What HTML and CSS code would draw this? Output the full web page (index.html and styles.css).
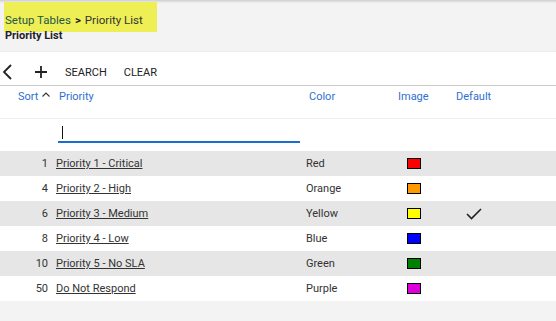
FILE: index.html
```html
<!DOCTYPE html>
<html lang="en">
<head>
    <meta charset="UTF-8">
    <title>Priority List</title>
    <link rel="stylesheet" href="styles.css">
</head>
<body>
    <!-- Page header -->
    <div class="page-header">
        <div class="crumbs">
            <a class="crumb-link" href="#">Setup Tables</a>
            <span class="crumb-sep">&gt;</span>
            <span class="crumb-current">Priority List</span>
        </div>
        <div class="page-title">Priority List</div>
    </div>

    <div class="panel">
        <!-- Toolbar -->
        <div class="toolbar">
            <button class="icon-btn" title="Back">
                <svg width="12" height="16" viewBox="0 0 12 16"><path d="M9 1 L2 8 L9 15" fill="none" stroke="#222" stroke-width="1.8"/></svg>
            </button>
            <button class="icon-btn plus" title="Add">
                <svg width="14" height="14" viewBox="0 0 14 14"><path d="M7 1 V13 M1 7 H13" fill="none" stroke="#222" stroke-width="1.8"/></svg>
            </button>
            <button class="text-btn">SEARCH</button>
            <button class="text-btn">CLEAR</button>
        </div>

        <!-- Grid -->
        <div class="grid">
            <div class="row head">
                <div class="c-sort">Sort <svg class="caret" width="8" height="5" viewBox="0 0 8 5"><path d="M0.5 4.5 L4 1 L7.5 4.5" fill="none" stroke="#333" stroke-width="1.1"/></svg></div>
                <div class="c-name">Priority</div>
                <div class="c-color">Color</div>
                <div class="c-image">Image</div>
                <div class="c-default">Default</div>
            </div>
            <div class="row filter">
                <div class="c-sort"></div>
                <div class="c-name"><div class="filter-input"><span class="cursor"></span></div></div>
            </div>

            <div class="row odd">
                <div class="c-sort num">1</div>
                <div class="c-name"><a href="#">Priority 1 - Critical</a></div>
                <div class="c-color">Red</div>
                <div class="c-image"><span class="swatch" style="background:#ff0000"></span></div>
                <div class="c-default"></div>
            </div>
            <div class="row">
                <div class="c-sort num">4</div>
                <div class="c-name"><a href="#">Priority 2 - High</a></div>
                <div class="c-color">Orange</div>
                <div class="c-image"><span class="swatch" style="background:#ff9900"></span></div>
                <div class="c-default"></div>
            </div>
            <div class="row odd">
                <div class="c-sort num">6</div>
                <div class="c-name"><a href="#">Priority 3 - Medium</a></div>
                <div class="c-color">Yellow</div>
                <div class="c-image"><span class="swatch" style="background:#ffff00"></span></div>
                <div class="c-default">
                    <svg class="check" width="16" height="12" viewBox="0 0 16 12"><path d="M1 6 L5.5 10.5 L15 1" fill="none" stroke="#222" stroke-width="1.6"/></svg>
                </div>
            </div>
            <div class="row">
                <div class="c-sort num">8</div>
                <div class="c-name"><a href="#">Priority 4 - Low</a></div>
                <div class="c-color">Blue</div>
                <div class="c-image"><span class="swatch" style="background:#0000ff"></span></div>
                <div class="c-default"></div>
            </div>
            <div class="row odd">
                <div class="c-sort num">10</div>
                <div class="c-name"><a href="#">Priority 5 - No SLA</a></div>
                <div class="c-color">Green</div>
                <div class="c-image"><span class="swatch" style="background:#008000"></span></div>
                <div class="c-default"></div>
            </div>
            <div class="row">
                <div class="c-sort num">50</div>
                <div class="c-name"><a href="#">Do Not Respond</a></div>
                <div class="c-color">Purple</div>
                <div class="c-image"><span class="swatch" style="background:#dd00dd"></span></div>
                <div class="c-default"></div>
            </div>
        </div>
    </div>
</body>
</html>
```

FILE: styles.css
```css
/* Global Styles */
body {
    font-family: Roboto, "Liberation Sans", sans-serif;
    font-size: 11px;
    margin: 0;
    padding: 0;
    background: #f3f3f3;
    color: #333;
    min-height: 100vh;
}

/* Page header */
.page-header {
    height: 52px;
    box-sizing: border-box;
    padding: 2px 4px 0;
    box-shadow: inset 0 3px 3px -2px rgba(0, 0, 0, 0.2);
    border-bottom: 1px solid #ececec;
}
.crumbs {
    display: flex;
    align-items: center;
    background: #eeee55;
    width: 153px;
    height: 30px;
    box-sizing: border-box;
    padding: 6px 0 0 1px;
    font-size: 11.5px;
}
.crumb-link {
    color: #23584a;
    text-decoration: none;
}
.crumb-sep {
    font-weight: bold;
    margin: 0 4px;
    color: #222;
}
.crumb-current {
    color: #333;
}
.page-title {
    margin-top: -3px;
    padding-left: 1px;
    font-size: 11px;
    font-weight: bold;
    color: #222;
}

/* Panel */
.panel {
    background: #fff;
}
.toolbar {
    display: flex;
    align-items: center;
    height: 34px;
    padding-top: 7px;
    box-sizing: border-box;
    border-bottom: 1px solid #cccccc;
}
.icon-btn, .text-btn {
    background: none;
    border: none;
    padding: 0;
    cursor: pointer;
    font-family: inherit;
}
.icon-btn {
    display: flex;
    align-items: center;
    margin-left: 2px;
    width: 20px;
}
.icon-btn.plus {
    margin-left: 12px;
    width: 22px;
}
.text-btn {
    font-size: 11px;
    color: #222;
    margin-left: 9px;
    margin-right: 17px;
}
.text-btn + .text-btn {
    margin-left: 0;
}

/* Grid */
.row {
    display: flex;
    align-items: center;
    height: 25px;
}
.row.odd {
    background: #e6e6e6;
}
.row.head {
    height: 33px;
    align-items: flex-start;
    padding-top: 4px;
    box-sizing: border-box;
    border-bottom: 1px solid #efefef;
    color: #2f6fd0;
}
.row.filter {
    height: 32px;
    align-items: flex-start;
}
.c-sort {
    width: 52px;
    flex: none;
    text-align: right;
    padding-right: 4px;
    box-sizing: border-box;
    margin-left: 0;
}
.row.head .c-sort {
    width: 59px;
    text-align: left;
    padding-left: 18px;
}
.caret {
    margin-left: 1px;
    vertical-align: 3px;
}
.c-name {
    width: 254px;
    flex: none;
}
.row.head .c-name {
    width: 250px;
}
.row:not(.head) .c-name {
    padding-left: 4px;
    box-sizing: border-box;
}
.c-name a {
    color: #333;
    text-decoration: underline;
}
.c-color {
    width: 101px;
    flex: none;
}
.row.head .c-color {
    width: 89px;
}
.c-image {
    width: 60px;
    flex: none;
}
.row.head .c-image {
    width: 58px;
}
.c-default {
    flex: none;
}
.swatch {
    display: block;
    width: 12px;
    height: 9px;
    border: 1px solid #000;
}
.check {
    display: block;
    margin-left: -1px;
}
.filter-input {
    width: 242px;
    height: 21px;
    border-bottom: 2px solid #1a6ecf;
    position: relative;
    margin-left: 2px;
    margin-top: 1px;
}
.cursor {
    position: absolute;
    left: 4px;
    top: 6px;
    width: 1px;
    height: 13px;
    background: #111;
}
```
